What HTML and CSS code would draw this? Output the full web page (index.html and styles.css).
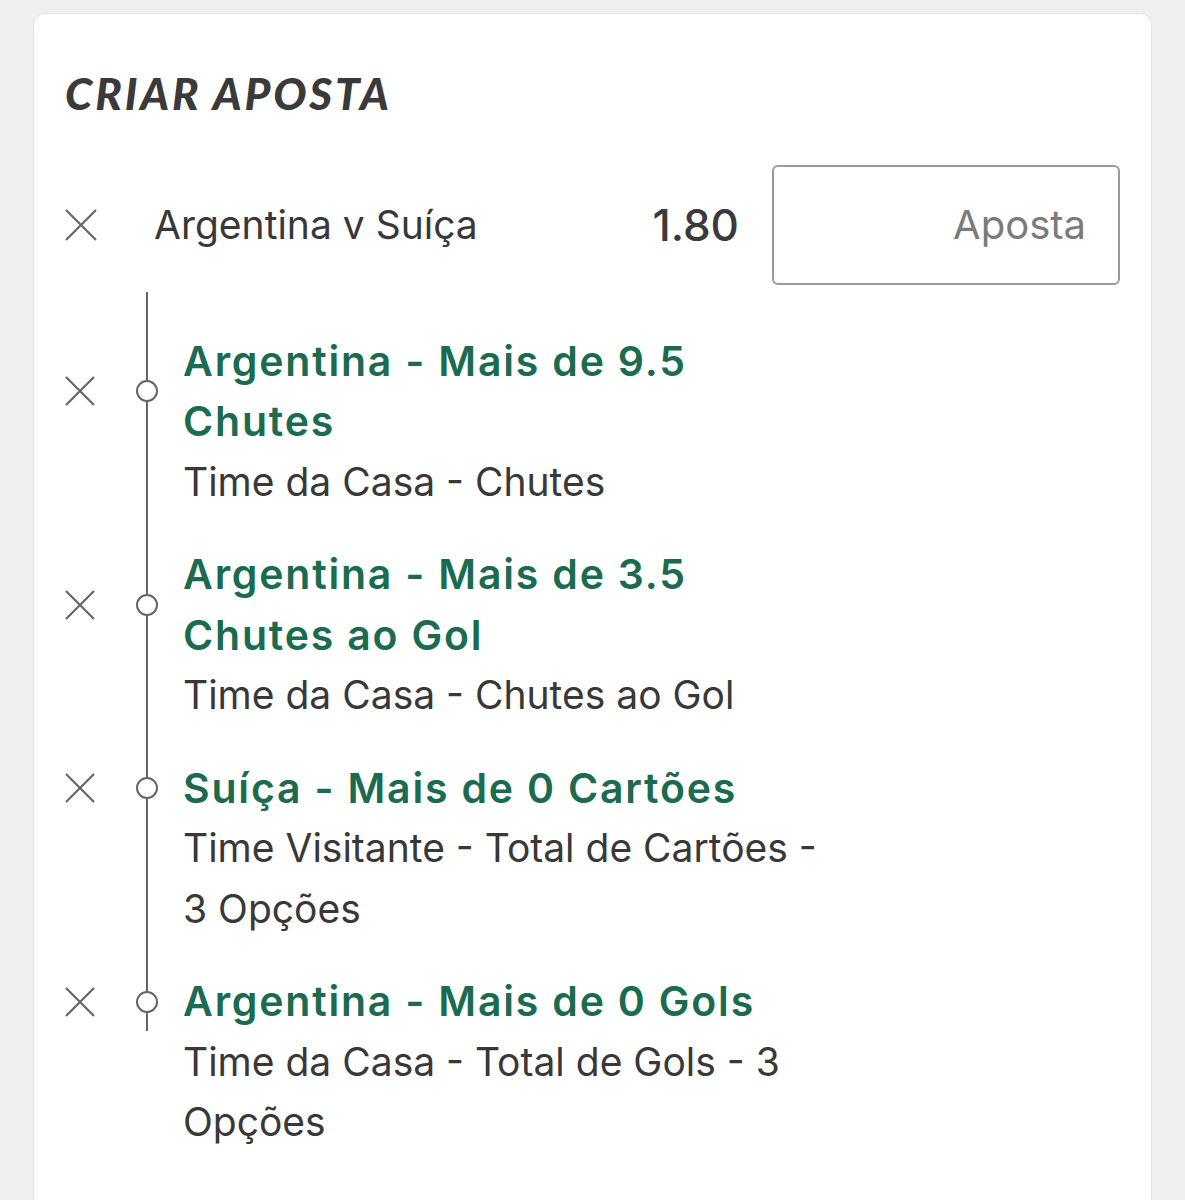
FILE: index.html
```html
<!DOCTYPE html>
<html lang="pt">
<head>
  <meta charset="UTF-8" />
  <meta name="viewport" content="width=device-width, initial-scale=1.0"/>
  <title>Criar Aposta</title>
  <link rel="stylesheet" href="styles.css">
</head>
<body>
  <div class="card">
    <h1 class="card-title">CRIAR APOSTA</h1>

    <div class="bet-row">
      <button class="remove-button big" aria-label="Remover">
        <svg viewBox="0 0 32 32" width="32" height="32"><path d="M1 1 L31 31 M31 1 L1 31" /></svg>
      </button>
      <div class="bet-name">Argentina v Suíça</div>
      <div class="bet-odds">1.80</div>
      <input class="stake-input" type="text" placeholder="Aposta">
    </div>

    <div class="timeline">
      <div class="selection">
        <button class="remove-button" aria-label="Remover">
          <svg viewBox="0 0 30 30" width="30" height="30"><path d="M1 1 L29 29 M29 1 L1 29" /></svg>
        </button>
        <span class="marker"></span>
        <div class="selection-title">Argentina - Mais de 9.5 Chutes</div>
        <div class="selection-market">Time da Casa - Chutes</div>
      </div>

      <div class="selection">
        <button class="remove-button" aria-label="Remover">
          <svg viewBox="0 0 30 30" width="30" height="30"><path d="M1 1 L29 29 M29 1 L1 29" /></svg>
        </button>
        <span class="marker"></span>
        <div class="selection-title">Argentina - Mais de 3.5 Chutes ao Gol</div>
        <div class="selection-market">Time da Casa - Chutes ao Gol</div>
      </div>

      <div class="selection">
        <button class="remove-button" aria-label="Remover">
          <svg viewBox="0 0 30 30" width="30" height="30"><path d="M1 1 L29 29 M29 1 L1 29" /></svg>
        </button>
        <span class="marker"></span>
        <div class="selection-title">Suíça - Mais de 0 Cartões</div>
        <div class="selection-market">Time Visitante - Total de Cartões - 3 Opções</div>
      </div>

      <div class="selection">
        <button class="remove-button" aria-label="Remover">
          <svg viewBox="0 0 30 30" width="30" height="30"><path d="M1 1 L29 29 M29 1 L1 29" /></svg>
        </button>
        <span class="marker"></span>
        <div class="selection-title">Argentina - Mais de 0 Gols</div>
        <div class="selection-market">Time da Casa - Total de Gols - 3 Opções</div>
      </div>
    </div>
  </div>
</body>
</html>
```

FILE: styles.css
```css
* {
  box-sizing: border-box;
  margin: 0;
  padding: 0;
}

:root {
  --page-bg: #efefef;
  --card-bg: #fff;
  --text-color: #383838;
  --muted-color: #666;
  --green: #1b6b4e;
  --border-color: #9a9a9a;
}

html,
body {
  height: 1200px;
  overflow: hidden;
}

body {
  font-family: Inter, "Liberation Sans", sans-serif;
  background: var(--page-bg);
  color: var(--text-color);
  padding: 13px 33px 0;
}

.card {
  background: var(--card-bg);
  border: 1px solid #e2e2e2;
  border-radius: 12px;
  padding: 53px 31px 60px 31px;
}

.card-title {
  font-family: Lato, sans-serif;
  font-size: 44px;
  line-height: 1.2;
  font-weight: 900;
  font-style: italic;
  color: #3a3a3a;
  letter-spacing: 2.9px;
}

.bet-row {
  display: flex;
  align-items: center;
  margin-top: 45px;
  height: 120px;
}

.remove-button {
  background: none;
  border: none;
  display: flex;
  align-items: center;
  justify-content: flex-start;
  cursor: pointer;
}

.remove-button svg path {
  stroke: var(--muted-color);
  stroke-width: 2.2;
  fill: none;
}

.bet-name {
  font-size: 39px;
  margin-left: 57px;
  flex: 1;
}

.bet-odds {
  font-size: 44px;
  font-weight: 500;
  color: #3a3a3a;
  margin-right: 33px;
}

.stake-input {
  width: 348px;
  height: 120px;
  border: 2px solid var(--border-color);
  border-radius: 6px;
  padding: 0 32px;
  font-family: inherit;
  font-size: 40px;
  text-align: right;
  color: var(--text-color);
}

.stake-input::placeholder {
  color: #7a7a7a;
}

.timeline {
  position: relative;
  padding-top: 46px;
}

.timeline::before {
  content: "";
  position: absolute;
  left: 81px;
  top: 7px;
  bottom: 122px;
  width: 2px;
  background: var(--muted-color);
}

.selection {
  display: grid;
  grid-template-columns: 71px 47px 1fr;
  margin-bottom: 32px;
}

.selection .remove-button {
  grid-column: 1;
  grid-row: 1;
  align-self: center;
}

.marker {
  grid-column: 2;
  grid-row: 1;
  align-self: center;
  width: 22px;
  height: 22px;
  border: 2px solid var(--muted-color);
  border-radius: 50%;
  background: var(--card-bg);
  position: relative;
  z-index: 1;
}

.selection-title,
.selection-market {
  grid-column: 3;
  max-width: 648px;
  line-height: 60.5px;
}

.selection-title {
  grid-row: 1;
  color: var(--green);
  font-size: 41px;
  font-weight: 600;
  letter-spacing: 1.8px;
}

.selection-market {
  grid-row: 2;
  font-size: 39px;
}
```
